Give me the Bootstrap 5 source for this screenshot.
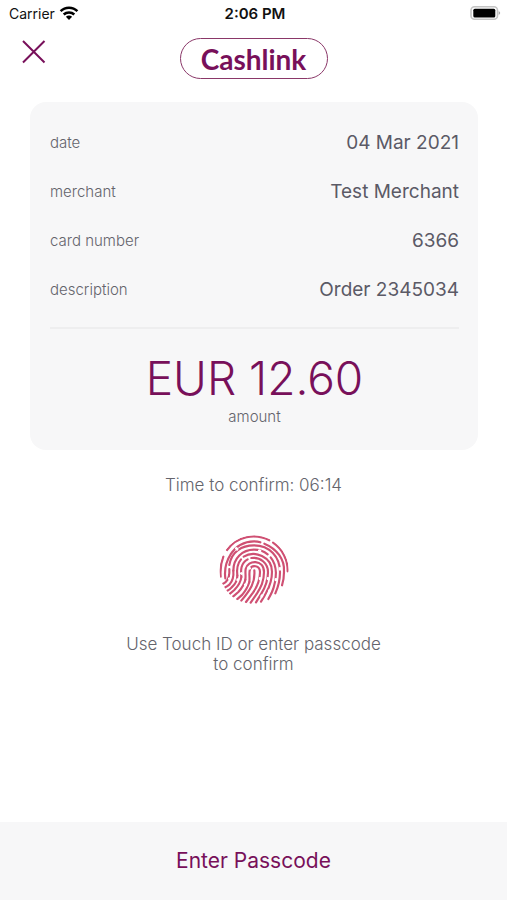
<!DOCTYPE html>
<html lang="en">
<head>
<meta charset="utf-8">
<meta name="viewport" content="width=device-width, initial-scale=1">
<title>Cashlink</title>
<link href="https://cdn.jsdelivr.net/npm/bootstrap@5.3.0/dist/css/bootstrap.min.css" rel="stylesheet">
<style>
body{font-family:Inter,"Liberation Sans",sans-serif;color:#64646c;background:#fff}
.status-bar{height:28px;font-size:14px;line-height:28px;color:#111;padding:0 6px 0 9px}
.side{flex:1 1 0}
.clock{font-weight:600;font-size:15px}
.top-bar{height:62px;padding:0 21px}
.close-btn{width:26px;height:26px;margin-top:11px;line-height:0}
.brand-pill{width:148px;height:41px;margin-top:10px;border:1px solid #8a3768;border-radius:21px;color:#78105a;font:700 28px/40px Lato,sans-serif;text-align:center}
.details{margin:12px 29px 0 30px;padding:17px 19px 20px 20px;background:#f7f7f8;border-radius:16px}
.detail-row{height:49px}
.detail-row dt{font-weight:300;font-size:15px}
.detail-row dd{font-size:19px;color:#5b5a66}
.rule{height:2px;background:#eeeeef;margin:12px 0 23px}
.sum{font-size:46px;line-height:52px;font-weight:300;color:#78105a}
.sum-label{font-size:15px;line-height:26px;font-weight:300}
.timer{font-size:17px;line-height:20px;margin-top:25px;font-weight:300}
.finger{margin-top:40px;line-height:0}
.hint{font-size:17px;line-height:20px;margin-top:29px;font-weight:300}
.bottom-bar{height:78px;background:#f7f7f8}
.pass-btn{font-size:21px;color:#78105a}
</style>
<script src="https://cdn.jsdelivr.net/npm/bootstrap@5.3.0/dist/js/bootstrap.bundle.min.js"></script>
</head>
<body class="d-flex flex-column min-vh-100">
<div class="status-bar d-flex align-items-center">
  <div class="side d-flex align-items-center gap-1"><span>Carrier</span>
    <svg width="20" height="16" viewBox="0 0 20 16" aria-hidden="true"><g fill="none" stroke="#000" stroke-width="2.5"><path d="M1.6 5.2C6.2 .6 13.8 .6 18.4 5.2"/><path d="M4.7 8.5C7.6 5.7 12.4 5.7 15.3 8.5"/></g><path d="M6.9 10.8C8.7 9.1 11.3 9.1 13.1 10.8L10 13.9z"/></svg>
  </div>
  <div class="clock">2:06 PM</div>
  <div class="side d-flex justify-content-end">
    <svg width="31" height="16" viewBox="0 0 31 16" aria-hidden="true"><rect x="1" y="0.8" width="26.5" height="12.5" rx="3.5" fill="#fff" stroke="#c4c4c4" stroke-width="1.6"/><rect x="3.3" y="2.7" width="22" height="8.8" rx="1.5"/><path d="M28.7 5q3 2 0 4z" fill="#aaa"/></svg>
  </div>
</div>
<header class="top-bar d-flex">
  <div class="side"><button class="btn p-0 border-0 close-btn" type="button" aria-label="Close"><svg width="26" height="26" viewBox="0 0 26 26"><path d="M2 2L23.5 23.5M23.5 2L2 23.5" stroke="#78105a" stroke-width="2" fill="none"/></svg></button></div>
  <div class="brand-pill">Cashlink</div>
  <div class="side"></div>
</header>
<main class="flex-grow-1 text-center">
  <section class="details">
    <dl class="mb-0">
      <div class="detail-row d-flex justify-content-between align-items-center"><dt>date</dt><dd class="mb-0">04 Mar 2021</dd></div>
      <div class="detail-row d-flex justify-content-between align-items-center"><dt>merchant</dt><dd class="mb-0">Test Merchant</dd></div>
      <div class="detail-row d-flex justify-content-between align-items-center"><dt>card number</dt><dd class="mb-0">6366</dd></div>
      <div class="detail-row d-flex justify-content-between align-items-center"><dt>description</dt><dd class="mb-0">Order 2345034</dd></div>
    </dl>
    <div class="rule"></div>
    <div class="sum">EUR 12.60</div>
    <div class="sum-label">amount</div>
  </section>
  <p class="timer mb-0">Time to confirm: 06:14</p>
  <div class="finger">
    <svg width="70" height="70" viewBox="26 17 210 210" role="img" aria-label="Touch ID">
      <defs><clipPath id="pad"><circle cx="131" cy="121" r="104"/></clipPath></defs>
      <g clip-path="url(#pad)">
        <g fill="none" stroke="#cf5073" stroke-width="6.5" stroke-linecap="round">
          <path d="M50 62C80 21 134 11 177 33"/>
          <path d="M188 40A101 101 0 0 1 232 126"/>
          <path d="M39 82C32 100 29 118 31 142"/>
          <path d="M45 147C39 101 66 37 131 36Q142 36 150 39"/>
          <path d="M162 43C199 58 224 90 221 128Q221 150 215 168"/>
          <path d="M57 107C64 67 94 48 131 48C178 48 209 83 209 128C209 153 204 172 195 192"/>
          <path d="M57 119C58 134 57 148 47 157Q43 161 38 163"/>
          <path d="M69 124C69 87 96 61 131 61C148 61 161 66 172 75"/>
          <path d="M181 84C203 111 198 151 190 174Q186 188 174 209"/>
          <path d="M69 124C71 147 66 157 57 166Q51 171 45 174"/>
          <path d="M81 139C79 122 80 104 92 90"/>
          <path d="M100 82C133 61 185 83 185 127C185 151 178 171 168 189Q162 202 152 217"/>
          <path d="M81 139Q81 159 64 174Q59 180 51 184"/>
          <path d="M93 143C91 121 91 102 112 90"/>
          <path d="M123 86C150 82 173 102 173 128C173 158 164 175 153 193L137 219"/>
          <path d="M93 143Q91 163 72 182L59 193"/>
          <path d="M105 151C107 138 104 129 106 119C112 90 161 90 161 128C161 157 151 174 140 192L121 220"/>
          <path d="M105 151Q101 169 84 188L68 202"/>
          <path d="M117 158C119 140 115 131 119 120C124 105 149 108 149 128C149 153 139 174 128 190L107 218"/>
          <path d="M117 158Q112 176 96 196L80 210"/>
          <path d="M132 123Q134 150 124 170Q115 188 93 214"/>
        </g>
        <g fill="none" stroke="#fff" stroke-width="8" stroke-linecap="round">
          <path d="M78 57l2 3M57 148l1 1M93 132l1 1M105 166l1 1M209 117v3M197 150v2M173 147v2M149 147v2M178 183l-1 2M117 116l1 1M155 199l-1 2M82 151v1M147 64l2 1"/>
        </g>
      </g>
    </svg>
  </div>
  <p class="hint mb-0">Use Touch ID or enter passcode<br>to confirm</p>
</main>
<footer class="bottom-bar d-flex justify-content-center align-items-center"><button class="btn border-0 p-2 pass-btn" type="button">Enter Passcode</button></footer>
</body>
</html>
